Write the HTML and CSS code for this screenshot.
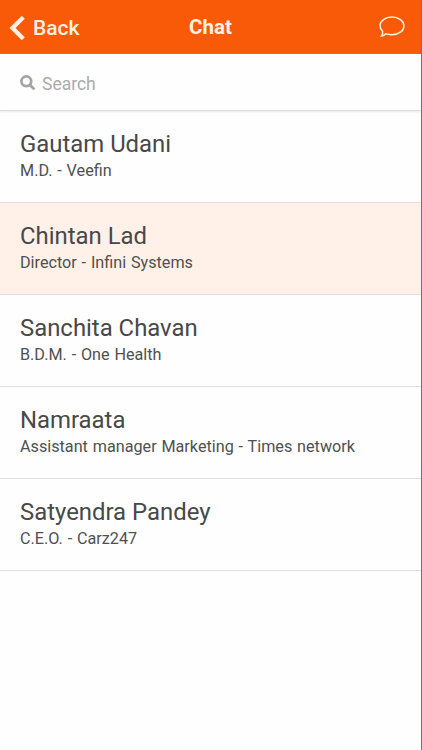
FILE: index.html
```html
<!DOCTYPE html>
<html lang="en">
<head>
    <meta charset="UTF-8">
    <meta name="viewport" content="width=device-width, initial-scale=1.0">
    <title>Chat</title>
    <link rel="stylesheet" href="styles.css">
</head>
<body>
    <div id="wrapper">
        <div id="header">
            <a class="back">
                <svg width="16" height="26" viewBox="0 0 16 26"><path d="M14.3 2.3 L3.5 13 L14.3 23.7"/></svg>
                <span>Back</span>
            </a>
            <h1>Chat</h1>
            <a class="bubble">
                <svg width="26" height="22" viewBox="0 0 26 22"><path d="M3.6 15.2 C1.9 13.6 1 11.8 1 9.8 C1 4.9 6.2 1.1 12.9 1.1 C19.7 1.1 24.9 4.9 24.9 9.9 C24.9 14.9 19.7 18.7 13 18.7 C10.7 18.7 8.6 18.2 6.8 17.8 C5.6 18.8 4 19.9 2.4 20.1 C3.4 18.8 3.9 17.2 3.6 15.2 Z"/></svg>
            </a>
        </div>
        <div id="search">
            <svg width="16" height="16" viewBox="0 0 16 16"><circle cx="6.3" cy="6.3" r="4.9"/><path d="M10 10 L14.4 14.4"/></svg>
            <span>Search</span>
        </div>
        <ul id="list">
            <li><h2>Gautam Udani</h2><p>M.D. - Veefin</p></li>
            <li class="on"><h2>Chintan Lad</h2><p>Director - Infini Systems</p></li>
            <li><h2>Sanchita Chavan</h2><p>B.D.M. - One Health</p></li>
            <li><h2>Namraata</h2><p>Assistant manager Marketing - Times network</p></li>
            <li><h2>Satyendra Pandey</h2><p>C.E.O. - Carz247</p></li>
        </ul>
    </div>
</body>
</html>
```
FILE: styles.css
```css
*{
    margin: 0;
    padding: 0;
    box-sizing: border-box;
}
body{
    font-family: Roboto, "Liberation Sans", sans-serif;
    background: #fefefe;
    color: #484848;
}
#wrapper{
    height: 750px;
    border-right: 1px solid #587d8e;
    overflow: hidden;
}
#header{
    height: 54px;
    padding: 0 16px 0 9px;
    background: #f85a08;
    color: #fff1e4;
    display: grid;
    grid-template-columns: 1fr auto 1fr;
    align-items: center;
}
#header svg{
    display: block;
    fill: none;
    stroke: #fff1e4;
}
#header h1{
    font-size: 20.5px;
    font-weight: 700;
    line-height: 24px;
    margin-left: 7px;
}
.back{
    display: flex;
    align-items: center;
    font-size: 21px;
    font-weight: 500;
    line-height: 24px;
    padding-top: 2px;
}
.back svg{
    stroke-width: 4.3;
    margin-right: 8px;
}
.bubble{
    justify-self: end;
}
.bubble svg{
    stroke-width: 1.5;
}
#search{
    height: 57px;
    padding: 3px 20px 0;
    border-bottom: 1px solid #dedede;
    box-shadow: 0 1px 2px #e8e8e8;
    display: flex;
    align-items: center;
    font-size: 17.5px;
    color: #acacac;
}
#search svg{
    fill: none;
    stroke: #a4a4a4;
    stroke-width: 2.7;
    margin: -1px 6px 0 0;
}
#list{
    list-style: none;
}
#list li{
    height: 92px;
    padding: 18px 20px 0;
    border-bottom: 1px solid #e0dfe0;
}
#list li.on{
    background: #fff0e8;
}
#list h2{
    font-size: 23.9px;
    font-weight: 400;
    line-height: 30px;
}
#list p{
    font-size: 16.2px;
    line-height: 24px;
    word-spacing: .8px;
    color: #505050;
}
```
